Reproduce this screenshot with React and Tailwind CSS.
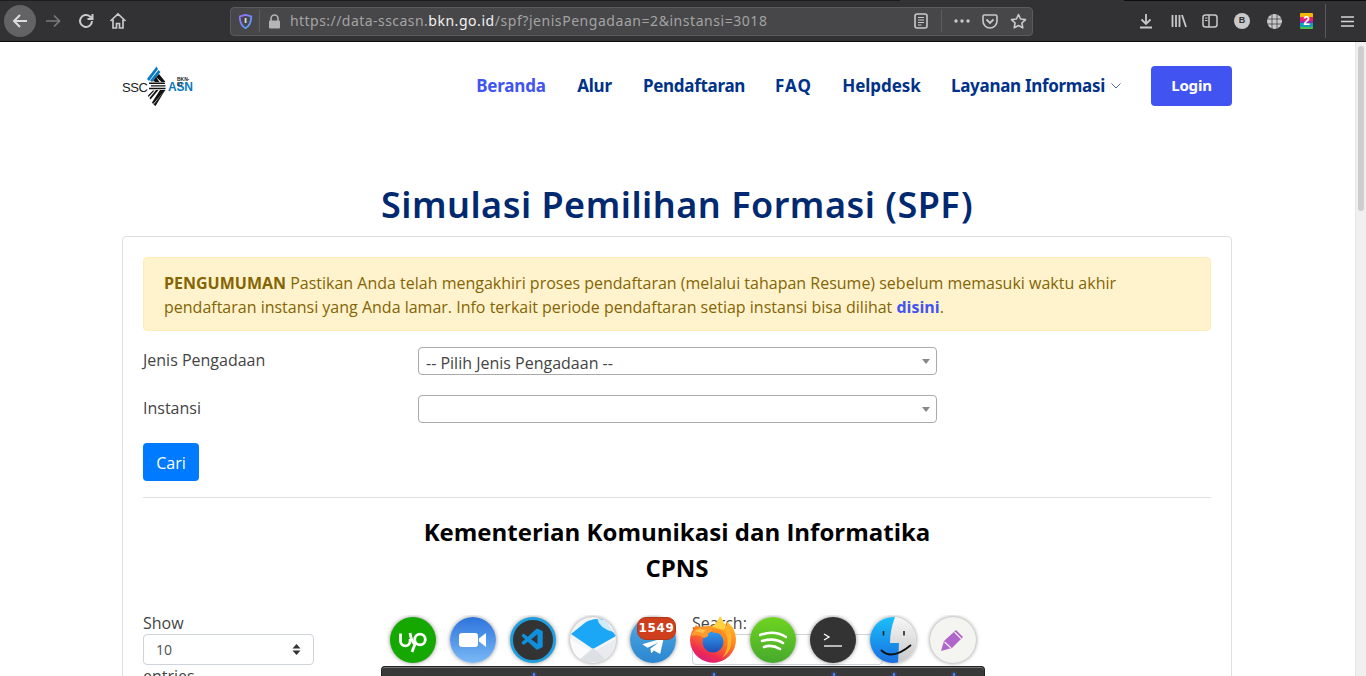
import React from "react";
import { VscVscode } from "react-icons/vsc";

const ToolBtn = ({ children, className = "" }) => (
  <div className={"flex items-center justify-center shrink-0 " + className}>{children}</div>
);

const S = ({ w = 18, h = 18, vb = "0 0 18 18", children, className = "" }) => (
  <svg width={w} height={h} viewBox={vb} fill="none" className={className}>{children}</svg>
);

function Toolbar() {
  const ic = "#c9c9ca";
  return (
    <div className="h-[42px] bg-[#323234] border-b border-[#0c0c0d] flex flex-col shrink-0">
      <div className="h-px flex shrink-0">
        <div className="w-[900px] bg-[#1c1c1e]" />
        <div className="w-[224px] bg-[#323234]" />
        <div className="flex-1 bg-[#0c0c0d]" />
      </div>
      <div className="flex-1 flex items-center relative">
        <div className="w-[32px] h-[32px] ml-[4px] rounded-full bg-[#636365] flex items-center justify-center shrink-0">
          <S><path d="M16 9H3M9 3 3 9l6 6" stroke="#ddd" strokeWidth="2" /></S>
        </div>
        <ToolBtn className="w-[18px] ml-[8px]"><S><path d="M2 9h13M10 3.5 15.500 9 10 14.500" stroke="#7a7a7c" strokeWidth="1.700" /></S></ToolBtn>
        <ToolBtn className="w-[18px] ml-[15px]"><S><path d="M15 9a6 6 0 1 1-2-4.500L15 6.500M15.500 2v5h-5" stroke={ic} strokeWidth="2" /></S></ToolBtn>
        <ToolBtn className="w-[18px] ml-[14px]"><S><path d="M1.500 9 9 2l7.500 7M4 7.500V16h3.500v-4.500h3V16H14V7.500" stroke={ic} strokeWidth="1.700" /></S></ToolBtn>
        <div className="ml-[103px] w-[803px] h-[29px] rounded-[4px] bg-[#474749] border border-[#5b5b5d] flex items-center shrink-0">
          <ToolBtn className="w-[14px] ml-[7px]">
            <svg width="13" height="15" viewBox="0 0 13 15"><defs><linearGradient id="sh" x1="0" y1="0" x2="1" y2="1"><stop offset="0" stopColor="#9b6bff" /><stop offset="1" stopColor="#4aa8ff" /></linearGradient></defs><path d="M6.500.8 12.200 2.500c0 6-1.500 9.500-5.700 11.700C2.300 12 .8 8.500.8 2.500z" fill="none" stroke="url(#sh)" strokeWidth="1.800" /><rect x="5.700" y="4" width="1.800" height="5" fill="#d8d8e8" /></svg>
          </ToolBtn>
          <div className="w-px h-[22px] bg-[#5d5d5f] ml-[7px]" />
          <ToolBtn className="w-[13px] ml-[8px]"><svg width="13" height="15" viewBox="0 0 13 15"><path d="M3 7V4.500a3.500 3.500 0 0 1 7 0V7" stroke="#b5b5b6" strokeWidth="1.600" fill="none" /><rect x="1" y="6.500" width="11" height="8" rx="1" fill="#b5b5b6" /></svg></ToolBtn>
          <div className="ml-[9px] flex-1 whitespace-nowrap text-[14px] tracking-[0.55px] text-[#a3a3a4] font-['Noto_Sans',sans-serif] leading-none">
            <span className="tracking-[0.45px]">https://data-sscasn.</span><span className="text-[#f2f2f2]">bkn.go.id</span>/spf?jenisPengadaan=2&amp;instansi=3018
          </div>
          <ToolBtn className="w-[16px] mr-[12px]"><svg width="14" height="16" viewBox="0 0 14 16"><rect x="1" y="1" width="12" height="14" rx="2" stroke={ic} strokeWidth="1.600" fill="none" /><path d="M4 4.500h6M4 7h6M4 9.500h6M4 12h3.500" stroke={ic} strokeWidth="1.100" /></svg></ToolBtn>
          <div className="w-px h-[22px] bg-[#5d5d5f] mr-[11px]" />
          <ToolBtn className="w-[18px] mr-[10px]"><svg width="16" height="4" viewBox="0 0 16 4"><circle cx="2" cy="2" r="1.700" fill={ic} /><circle cx="8" cy="2" r="1.700" fill={ic} /><circle cx="14" cy="2" r="1.700" fill={ic} /></svg></ToolBtn>
          <ToolBtn className="w-[18px] mr-[10px]"><svg width="16" height="15" viewBox="0 0 16 15"><path d="M1 2.500A1.500 1.500 0 0 1 2.500 1h11A1.500 1.500 0 0 1 15 2.500V7A7 7 0 0 1 1 7z" stroke={ic} strokeWidth="1.600" fill="none" /><path d="m4.500 5.500 3.500 3.500 3.500-3.500" stroke={ic} strokeWidth="1.800" fill="none" /></svg></ToolBtn>
          <ToolBtn className="w-[18px] mr-[5px]"><svg width="17" height="17" viewBox="0 0 17 17"><path d="m8.500 1.500 2.100 4.500 4.900.6-3.600 3.400.9 4.900-4.300-2.400-4.300 2.400.9-4.900L1.500 6.600 6.400 6z" stroke={ic} strokeWidth="1.600" strokeLinejoin="round" fill="none" /></svg></ToolBtn>
        </div>
        <ToolBtn className="w-[14px] ml-[106px]"><svg width="14" height="16" viewBox="0 0 14 16"><path d="M7 1v10M2.500 6.500 7 11l4.500-4.500M1 14.500h12" stroke={ic} strokeWidth="1.800" fill="none" /></svg></ToolBtn>
        <ToolBtn className="w-[16px] ml-[18px]"><svg width="16" height="14" viewBox="0 0 16 14"><path d="M1.500 1v12M5 1v12M8.500 1v12" stroke={ic} strokeWidth="1.800" /><path d="m11 1 4 12" stroke={ic} strokeWidth="1.800" /></svg></ToolBtn>
        <ToolBtn className="w-[16px] ml-[15px]"><svg width="16" height="14" viewBox="0 0 16 14"><rect x="1" y="1" width="14" height="12" rx="2.500" stroke={ic} strokeWidth="1.500" fill="none" /><path d="M7 1v12" stroke={ic} strokeWidth="1.500" /><path d="M3 4h2.500M3 6.500h2.500" stroke={ic} strokeWidth="1" /></svg></ToolBtn>
        <div className="ml-[16px] w-[16px] h-[16px] rounded-full bg-[#c9c9ca] flex items-center justify-center text-[9px] font-bold text-[#323234] font-['Liberation_Sans',sans-serif] shrink-0">B</div>
        <ToolBtn className="w-[16px] ml-[16px]"><svg width="15" height="15" viewBox="0 0 15 15"><circle cx="7.500" cy="7.500" r="7.500" fill={ic} /><path d="M0 5h15M0 10h15M5 0v15M10 0v15" stroke="#323234" strokeWidth=".7" /></svg></ToolBtn>
        <div className="ml-[18px] w-[13px] h-[16px] flex flex-col items-center justify-center relative shrink-0 bg-[linear-gradient(#f5b60b_0_25%,#e2236b_25%_50%,#8e2bb8_50%_62%,#149db5_62%_85%,#4cc04c_85%)] rounded-[1px]">
          <span className="text-white font-bold text-[12px] leading-none font-['Liberation_Sans',sans-serif]">2</span>
        </div>
        <div className="w-px h-[34px] bg-[#5a5a5c] ml-[12px] shrink-0" />
        <ToolBtn className="w-[13px] ml-[15px]"><svg width="13" height="11" viewBox="0 0 13 11"><path d="M0 1h13M0 5.500h13M0 10h13" stroke="#d5d5d6" strokeWidth="1.700" /></svg></ToolBtn>
      </div>
    </div>
  );
}

function Logo() {
  return (
    <div className="relative w-[72px] h-[40px] shrink-0">
      <svg width="76" height="44" viewBox="0 0 76 44" className="absolute -left-[2px] -top-[2px]">
        <path d="M36.500 2.500 27 15l2 2L38 5z" fill="#0a79c4" />
        <path d="M38.500 6 30 16.500l2 1.500 8.500-10z" fill="#0a79c4" />
        <path d="m36 13 3-3 6.500 8h-4zM33 17l3-4 3.500 5h-4z" fill="#111" />
        <path d="M29 18.500h15.500l.8 1.500H29zM31 21.200h14.500v1.400H31zM29 23.800h16.500v1.400H29z" fill="#111" />
        <path d="M40 26h5.500L33 40l-1-1.500zM36 26h2.500L30.500 35.500l-1-1.500zM33 26.500h1.500L28.500 33 28 31.500z" fill="#111" />
        <path d="M45.500 25.500 35.500 42l-2-1.500z" fill="#111" />
      </svg>
      <span className="absolute left-0 top-[14px] text-[13px] leading-[16px] tracking-[-0.4px] text-[#222] font-['Liberation_Sans',sans-serif]">SSC</span>
      <span className="absolute left-[46px] top-[14px] text-[12px] leading-[15px] font-bold tracking-[-0.2px] text-[#0a79c4] font-['Liberation_Sans',sans-serif]">ASN</span>
      <span className="absolute left-[55px] top-[11px] text-[5px] leading-[5px] font-bold text-[#222] font-['Liberation_Sans',sans-serif]">BKN-01</span>
    </div>
  );
}

function Nav() {
  const items = [["Alur", "w-[37px]"], ["Pendaftaran", "w-[102px] tracking-[-0.3px]"], ["FAQ", "w-[37px] tracking-[1px]"], ["Helpdesk", "w-[79px] tracking-[-0.05px]"]];
  return (
    <div className="flex items-center justify-between h-[88px]">
      <Logo />
      <div className="flex items-center text-[17px] font-bold text-[#013289] font-['Noto_Sans',sans-serif] tracking-[-0.2px]">
        <span className="w-[70px] text-center text-[#4154f1] mr-[30px]">Beranda</span>
        {items.map(([t, w]) => <span key={t} className={"text-center whitespace-nowrap mr-[30px] " + w}>{t}</span>)}
        <span className="w-[153px] text-center whitespace-nowrap tracking-[-0.3px]">Layanan Informasi</span>
        <svg width="10" height="6" viewBox="0 0 10 6" className="ml-[7px] mr-[30px]"><path d="m.5.500 4.500 4.500L9.500.500" stroke="#4a6ab0" fill="none" /></svg>
        <div className="w-[81px] h-[40px] rounded-[4px] bg-[#4154f1] text-white text-[15px] flex items-center justify-center pb-[2px]">Login</div>
      </div>
    </div>
  );
}

function Select({ children }) {
  return (
    <div className="w-[519px] h-[28px] rounded-[4px] border border-[#aaa] bg-white flex items-center pl-[7px] pr-[6px] text-[16px] text-[#444] shrink-0">
      <span className="flex-1 leading-[32px] h-[28px]">{children}</span>
      <div className="w-0 h-0 border-x-[4px] border-x-transparent border-t-[5px] border-t-[#888]" />
    </div>
  );
}

const Round = ({ className = "", children }) => (
  <div className={"w-[46px] h-[46px] rounded-full flex items-center justify-center shrink-0 shadow-[0_0_4px_rgba(0,0,0,0.45)] relative " + className}>{children}</div>
);

function Dock() {
  return (
    <div className="absolute left-[381px] top-[615px] w-[604px] h-[61px] overflow-hidden">
      <div className="flex gap-[14px] pl-[9px] pt-[2px]">
        <Round className="bg-[#14a800]">
          <svg width="46" height="46" viewBox="0 0 46 46" fill="none"><path d="M10.500 16.500V24a4.800 4.800 0 0 0 9.600 0v-2" stroke="#fff" strokeWidth="2.800" /><circle cx="30" cy="22.500" r="5.300" stroke="#fff" strokeWidth="2.800" /><path d="M20 16c1 6 3 10 5 11-1 3-2 5-3 8" stroke="#fff" strokeWidth="2.800" /></svg>
        </Round>
        <Round className="bg-[linear-gradient(#2d74dc,#7ab8f5)]">
          <svg width="28" height="16" viewBox="0 0 28 16"><rect x="0" y="1" width="19" height="14" rx="3" fill="#fff" /><path d="M20 6.500 27 1v14l-7-5.500z" fill="#fff" /></svg>
        </Round>
        <Round className="bg-[#333] border-[3px] border-[#1d9fe0]"><VscVscode size={26} color="#0f8fdc" /></Round>
        <Round className="bg-[#f3f4f6] overflow-hidden">
          <svg width="46" height="46" viewBox="0 0 46 46"><path d="M1 17 16 5q9-4 16-3l11 13 3 4-23 13z" fill="#1ba7f5" /><path d="M27 1q2 10 16 14l-7-11z" fill="#cfeaf9" /><path d="M0 22 21 34 6 44z" fill="#fbfbfc" /><path d="M46 22 25 34l15 10z" fill="#e9ebee" /><path d="M23 31 7 45h32z" fill="#dde1e5" /></svg>
        </Round>
        <Round className="bg-[linear-gradient(#54a9e0,#2a86d0)]">
          <svg width="24" height="17" viewBox="0 0 26 19" className="mt-[13px] -ml-px"><path d="M1 7 25 0l-4 18-7-4-3 3-1-5 9-7-12 6z" fill="#fff" /></svg>
          <div className="absolute top-0 left-[7px] w-[39px] h-[23px] rounded-[9px] bg-[#cf3f1e] border border-[#b5371b] text-white text-[12px] leading-[20px] font-bold tracking-[0.6px] text-center font-['DejaVu_Sans',sans-serif]">1549</div>
        </Round>
        <div className="w-[46px] h-[46px] shrink-0">
          <svg width="46" height="46" viewBox="0 0 46 46" className="overflow-visible">
            <defs>
              <linearGradient id="ffb" x1="0.800" y1="0" x2="0.300" y2="1"><stop offset="0" stopColor="#ffc02e" /><stop offset=".45" stopColor="#ff7a1f" /><stop offset=".8" stopColor="#ee2a52" /><stop offset="1" stopColor="#d81d86" /></linearGradient>
              <linearGradient id="ffg" x1="0.500" y1="0" x2="0.500" y2="1"><stop offset="0" stopColor="#2f9bf0" /><stop offset="1" stopColor="#1f4fb5" /></linearGradient>
            </defs>
            <path d="M6 8C2 13 0 18 0 23a23 23 0 1 0 45-7c-1-5-5-9-9-12 1 3 1 5 0 7l-12-2C16 8 9 12 6 8z" fill="url(#ffb)" />
            <path d="M30 -1c-2 5-6 9-8 11l12 3c2-4-1-10-4-14z" fill="#ffd23f" />
            <path d="M34 6c6 5 9 12 7 22-1 6-5 10-9 13 4-5 7-12 5-21z" fill="#ffb42a" />
            <circle cx="23" cy="25" r="10.500" fill="url(#ffg)" />
            <path d="M1 19c3-8 10-10 17-8 2 0 3 1 5 1-1 3-4 3-5 5 1 2-1 3-4 4-2-2-9-4-13-2z" fill="#ff9a2e" />
            <path d="M5 14c3-2 7-2 11-1l-3 3c-2-1-6-1-8-2z" fill="#ffc34d" />
            <path d="M22 12c8-1 14 4 15 11-3-5-8-8-14-7z" fill="#ff8a1f" />
          </svg>
        </div>
        <Round className="bg-[linear-gradient(#6ed420,#46a92d)]">
          <svg width="28" height="22" viewBox="0 0 28 22"><path d="M1 6c8-3 18-3 26 2M3 12c7-2 15-2 21 2M5 18c5-2 11-1 16 2" stroke="#fff" strokeWidth="2.600" strokeLinecap="round" fill="none" /></svg>
        </Round>
        <Round className="bg-[#333]">
          <svg width="20" height="16" viewBox="0 0 20 16"><path d="m1 2 5 3-5 3" stroke="#fff" strokeWidth="1.300" fill="none" /><path d="M1 14h18" stroke="#fff" strokeWidth="1.300" /></svg>
        </Round>
        <Round className="overflow-hidden">
          <svg width="46" height="46" viewBox="0 0 46 46">
            <defs>
              <linearGradient id="fb" x1="0" y1="0" x2="0" y2="1"><stop offset="0" stopColor="#1ac0fb" /><stop offset="1" stopColor="#1a6ee0" /></linearGradient>
              <linearGradient id="fw" x1="0" y1="0" x2="0" y2="1"><stop offset="0" stopColor="#f6f6f6" /><stop offset="1" stopColor="#c8c8c8" /></linearGradient>
            </defs>
            <rect width="46" height="46" fill="url(#fw)" />
            <path d="M0 0h25q-5 13-5 26h9l-1 20H0z" fill="url(#fb)" />
            <path d="M13.500 14v4.500M34 14v4.500" stroke="#222" strokeWidth="1.600" />
            <path d="M11 33q11 11 30-5" stroke="#111" strokeWidth="1.800" fill="none" />
          </svg>
        </Round>
        <Round className="bg-[#f4f4f0]">
          <svg width="24" height="24" viewBox="0 0 24 24"><path d="M0 23 3 13 15 2l7 7-11 11z" fill="#b066c8" /><path d="m3.500 14 6.500 6" stroke="#f4f4f0" strokeWidth="1.100" /><path d="m13.500 4 6.500 6.500" stroke="#f4f4f0" strokeWidth="1.100" /></svg>
        </Round>
      </div>
      <div className="mt-[3px] h-[20px] rounded-t-[4px] bg-[#383838] border border-[#222] border-b-0 shadow-[inset_0_1px_0_#777] relative">
        {[151, 331, 451, 511, 571].map((x) => (
          <div key={x} className="absolute top-[6px] w-[2px] h-[3px] bg-[#3f7fff] shadow-[0_0_3px_#3f7fff]" style={{ left: x }} />
        ))}
      </div>
    </div>
  );
}

export default function App() {
  return (
    <div className="relative w-[1366px] h-[676px] overflow-hidden bg-white font-['Open_Sans',sans-serif] text-[16px] text-[#212529] flex flex-col">
      <Toolbar />
      <div className="flex flex-1 min-h-0">
        <div className="flex-1 min-w-0 pl-[122px] pr-[123px]">
          <Nav />
          <h1 className="mt-[52px] h-[54px] text-center text-[36px] leading-[46px] font-semibold text-[#012970] font-['Noto_Sans',sans-serif] tracking-[0.5px]">Simulasi Pemilihan Formasi (SPF)</h1>
          <div className="border border-[#dfdfdf] rounded-[4px] px-[20px] pt-[20px]">
            <div className="h-[74px] bg-[#fff3cd] border border-[#ffeeba] rounded-[4px] px-[20px] pt-[13px] text-[#856404] leading-[24px]">
              <b className="font-bold">PENGUMUMAN</b> Pastikan Anda telah mengakhiri proses pendaftaran (melalui tahapan Resume) sebelum memasuki waktu akhir pendaftaran instansi yang Anda lamar. Info terkait periode pendaftaran setiap instansi bisa dilihat <b className="font-bold text-[#4154f1]">disini</b>.
            </div>
            <div className="flex mt-[16px] h-[28px]">
              <div className="w-[275px] leading-[26px] text-[#444]">Jenis Pengadaan</div>
              <Select>-- Pilih Jenis Pengadaan --</Select>
            </div>
            <div className="flex mt-[20px] h-[28px]">
              <div className="w-[275px] leading-[26px] text-[#444]">Instansi</div>
              <Select />
            </div>
            <div className="mt-[20px] w-[56px] h-[38px] rounded-[4px] bg-[#007bff] text-white flex items-center justify-center pt-[2px]">Cari</div>
            <div className="mt-[16px] border-t border-[#e0e0e0]" />
            <div className="mt-[16px] text-center text-[24px] leading-[36px] font-bold text-black">
              <div>Kementerian Komunikasi dan Informatika</div>
              <div>CPNS</div>
            </div>
            <div className="flex mt-[32px]">
              <div className="w-[171px] text-[#444] leading-[24px]">
                <div className="h-[16px] leading-[10px]">Show</div>
                <div className="h-[31px] rounded-[4px] border border-[#ced4da] flex items-center pl-[12px] pr-[12px] text-[14px] text-[#495057]">
                  <span className="flex-1">10</span>
                  <svg width="9" height="11" viewBox="0 0 9 11"><path d="M4.500 0 8.500 4.500H.5zM4.500 11 .5 6.500h8z" fill="#333" /></svg>
                </div>
                <div className="leading-[22px]">entries</div>
              </div>
              <div className="ml-[378px] w-[191px]">
                <div className="h-[16px] leading-[10px] text-[#444]">Search:</div>
                <div className="h-[31px] rounded-[4px] border border-[#ced4da]" />
              </div>
            </div>
          </div>
        </div>
        <div className="w-[11px] shrink-0 bg-[#f0f0f0] border-l border-[#e6e6e6] p-[2px] pt-[4px]">
          <div className="h-[165px] w-full rounded-full bg-[#cdcdcd]" />
        </div>
      </div>
      <Dock />
    </div>
  );
}
